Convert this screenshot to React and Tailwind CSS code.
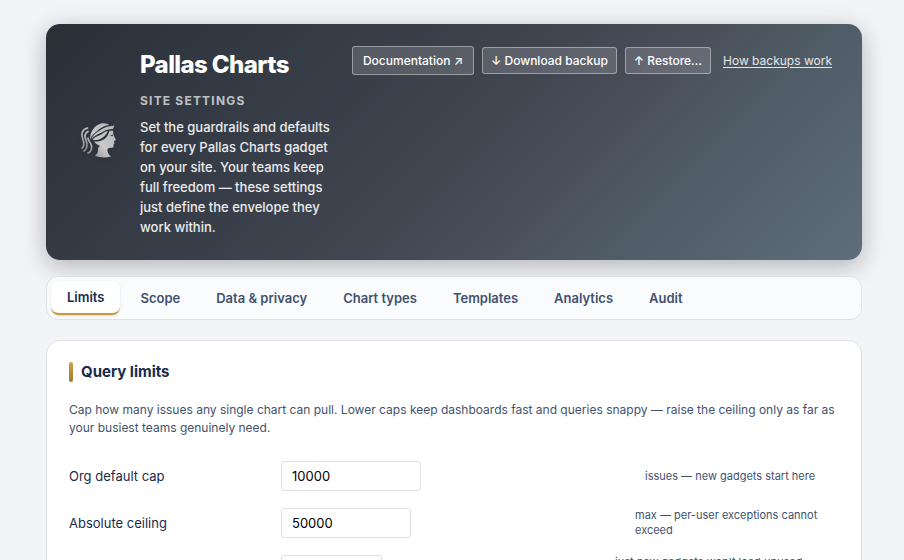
const tabs = ['Limits', 'Scope', 'Data & privacy', 'Chart types', 'Templates', 'Analytics', 'Audit'];

const limits = [
  { id: 'org-default', label: 'Org default cap', value: '10000', width: 'w-[140px]', hint: 'issues — new gadgets start here', hintWidth: 'w-[194px]' },
  { id: 'ceiling', label: 'Absolute ceiling', value: '50000', width: 'w-[130px]', hint: 'max — per-user exceptions cannot exceed', hintWidth: 'w-[204px]' },
  { id: 'gadgets', label: 'Gadgets per user', value: '50', width: 'w-[101px]', hint: "just new gadgets won't load unused dashboards past this", hintWidth: 'w-[224px]' },
];

const PallasLogo = () => (
  <svg viewBox="0 0 44 44" className="size-11 shrink-0 drop-shadow-sm" aria-hidden="true">
    <defs>
      <linearGradient id="silver" gradientUnits="userSpaceOnUse" x1="6" y1="34" x2="38" y2="6">
        <stop offset="0" stopColor="#858687" />
        <stop offset="0.5" stopColor="#c9c9c8" />
        <stop offset="1" stopColor="#b5b5b4" />
      </linearGradient>
    </defs>
    <g fill="url(#silver)">
      <path d="M14 19.500C14 12 18 5.500 25 3.500C29 2.700 31.500 3.500 33 5C27 6 23 9 20 12C17 14.500 15 16.500 14 19.500Z" />
      <path d="M38.500 5.500L37 9C32 8.500 28 11 24.500 13C20.500 15 17.500 16 15.500 19.500C17 14 22 11.500 26 9C30 6.500 34 6 38.500 5.500Z" />
      <path d="M32 11C29 11 26.500 14 23 15.500C20 16.800 18 17.500 16.500 20C21 20.500 28 19.500 32 11Z" />
      <path d="M33.500 10.800L37 10.800L37.500 15L40 20L38 21L38.500 23.500L37.500 24.500L37.500 27C36 28.500 33 27 31.500 29C31 32 32.500 34.500 35 36.500C29 38 24 37.500 19 36C21.500 34 22.500 31 22 28L24 26C22 25 19.500 23.500 18 21.500C25 22 31 20 33.500 10.800Z" />
    </g>
    <g fill="none" stroke="url(#silver)" strokeWidth="1.700" strokeLinecap="round">
      <path d="M11.500 8C6 9.500 5 14 6.500 18C8 22 9 26 6 28" />
      <path d="M12 11.500C8.500 13.500 8.500 17 10 20C11.500 24 11.500 29 8 31" />
      <path d="M12 18C12 21 15 22.500 15.500 26C16 29 14.500 32 12 33" />
    </g>
    <path d="M34 15.500L37 14.500L36.500 16.500Z" fill="#363c45" />
  </svg>
);

const buttonStyle = 'rounded-[3px] border border-white/40 bg-white/15 text-xs leading-[17px] font-medium whitespace-nowrap text-white';

const Header = () => (
  <header className="flex items-center gap-5 rounded-[14px] bg-[linear-gradient(135deg,#2b3037_0%,#343b45_25%,#404550_50%,#4b4f5c_64%,#4c5761_70%,#5f6e7b_100%)] px-[30px] py-[22px] shadow-[0_6px_24px_rgba(9,11,22,0.28)]">
    <PallasLogo />
    <div className="flex flex-1 items-start gap-4">
      <div className="min-w-0 flex-1">
        <h1 className="mt-[3px] text-2xl leading-8 font-extrabold tracking-tight text-white">Pallas Charts</h1>
        <p className="mt-2.5 text-xs leading-5 font-bold tracking-widest text-white/70 uppercase">Site settings</p>
        <p className="mt-1.5 mb-px text-[13px] leading-5 font-medium text-white/90">
          Set the guardrails and defaults for every Pallas Charts gadget on your site. Your teams keep full freedom — these settings just define the envelope they work within.
        </p>
      </div>
      <div className="flex shrink-0 items-center gap-2">
        <a href="#docs" className={`${buttonStyle} px-2.5 py-[5px]`}>Documentation ↗</a>
        <button type="button" className={`${buttonStyle} px-2 py-1`}>↓ Download backup</button>
        <button type="button" className={`${buttonStyle} px-2 py-1`}>↑ Restore…</button>
        <a href="#backups" className="ml-1 text-xs whitespace-nowrap text-white/85 underline underline-offset-2">How backups work</a>
      </div>
    </div>
  </header>
);

const Tabs = () => (
  <nav role="tablist" className="mt-4 flex gap-1 rounded-xl border border-[#dfe1e6] bg-[#fafbfd] p-1">
    {tabs.map((tab, i) => (
      <button
        key={tab}
        type="button"
        role="tab"
        aria-selected={i === 0}
        className={i === 0
          ? 'rounded-lg border-b-2 border-[#c49a3c] bg-white px-4 py-1.5 text-[13px] leading-5 font-semibold text-[#172b4d] shadow-sm'
          : 'rounded-lg px-4 py-1.5 text-[13px] leading-5 font-semibold text-[#42526e]'}
      >
        {tab}
      </button>
    ))}
  </nav>
);

const App = () => (
  <div className="h-screen overflow-hidden bg-[#f3f4f6] pt-6 pr-[42px] pl-[46px] font-['Inter',sans-serif] text-[#172b4d]">
    <Header />
    <Tabs />
    <section className="mt-5 rounded-[14px] border border-[#dfe1e6] bg-white px-[22px] py-[21px]">
      <h2 className="flex items-center gap-2 text-[15px] leading-5 font-bold">
        <span className="h-5 w-1 rounded-xs bg-linear-to-b from-[#cba24a] to-[#9c7a2b]" />
        Query limits
      </h2>
      <p className="mt-[19px] text-xs leading-[18px] text-[#42526e]">
        Cap how many issues any single chart can pull. Lower caps keep dashboards fast and queries snappy — raise the ceiling only as far as your busiest teams genuinely need.
      </p>
      <div className="mt-6 flex flex-col gap-[17px]">
        {limits.map((row) => (
          <div key={row.id} className="flex items-center">
            <label htmlFor={row.id} className="w-[212px] shrink-0 text-[13px] leading-5">{row.label}</label>
            <input id={row.id} type="text" defaultValue={row.value} className={`${row.width} h-[30px] rounded-[3px] border border-[#dfe1e6] bg-white px-2.5 text-[13px] text-black`} />
            <span className={`${row.hintWidth} ml-auto text-[11px] leading-[15px] text-[#42526e]`}>{row.hint}</span>
          </div>
        ))}
      </div>
    </section>
  </div>
);

export default App;
